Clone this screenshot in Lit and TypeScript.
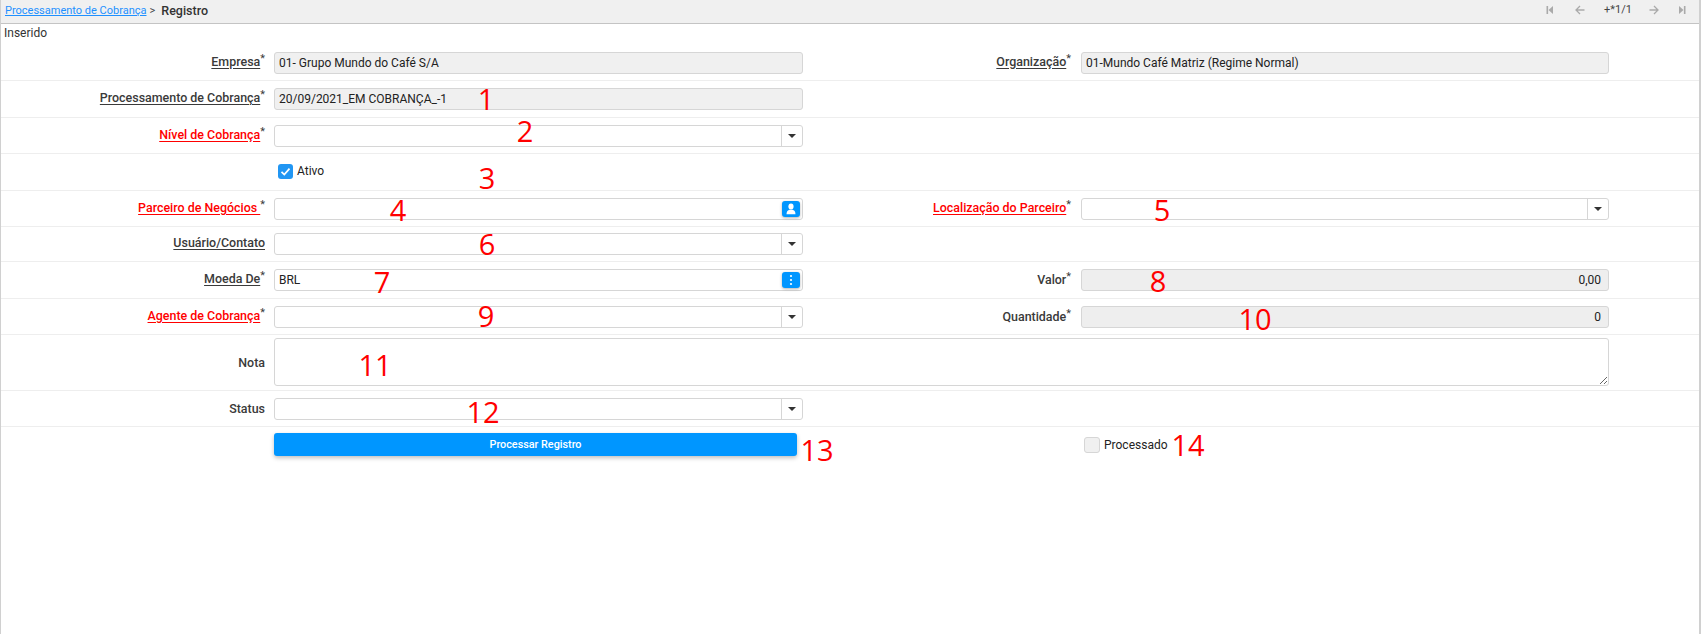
import { LitElement, html, css, nothing } from "lit";
import { customElement } from "lit/decorators.js";

type Kind = "ro" | "select" | "person" | "dots" | "roNum";
interface Field { label: string; kind: Kind; value?: string; req?: boolean; red?: boolean; plain?: boolean }
interface Row { h: number; a?: Field; b?: Field }

const rows: Row[] = [
  { h: 36, a: { label: "Empresa", kind: "ro", value: "01- Grupo Mundo do Café S/A", req: true }, b: { label: "Organização", kind: "ro", value: "01-Mundo Café Matriz (Regime Normal)", req: true } },
  { h: 37, a: { label: "Processamento de Cobrança", kind: "ro", value: "20/09/2021_EM COBRANÇA_-1", req: true } },
  { h: 36, a: { label: "Nível de Cobrança", kind: "select", req: true, red: true } },
];
const rows2: Row[] = [
  { h: 36, a: { label: "Parceiro de Negócios\u00a0", kind: "person", req: true, red: true }, b: { label: "Localização do Parceiro", kind: "select", req: true, red: true } },
  { h: 35, a: { label: "Usuário/Contato", kind: "select" } },
  { h: 37, a: { label: "Moeda De", kind: "dots", value: "BRL", req: true }, b: { label: "Valor", kind: "roNum", value: "0,00", req: true, plain: true } },
  { h: 36, a: { label: "Agente de Cobrança", kind: "select", req: true, red: true }, b: { label: "Quantidade", kind: "roNum", value: "0", req: true, plain: true } },
];
const notes: [string, number, number][] = [
  ["1", 486, 98], ["2", 525, 130], ["3", 487, 177], ["4", 398, 209], ["5", 1162, 209],
  ["6", 487, 243], ["7", 382, 281], ["8", 1158, 280], ["9", 486, 315], ["10", 1255, 318],
  ["11", 375, 364], ["12", 483, 411], ["13", 817, 449], ["14", 1188, 444],
];

@customElement("app-root")
export class AppRoot extends LitElement {
  static styles = css`
    :host { display: block; position: relative; width: 1701px; height: 634px; box-sizing: border-box; overflow: hidden; background: #fff;
      border-left: 1px solid #d0d0d0; border-right: 2px solid #d0d0d0; font: 12px Roboto, "Liberation Sans", Arial, sans-serif; color: #333; }
    .top { display: flex; align-items: center; box-sizing: border-box; background: #f0f0f0; border-bottom: 1px solid #c4c4c4; padding: 0 4px 3px 4px; height: 24px; }
    .crumb { color: #1e90ff; font-size: 11px; text-decoration: underline; }
    .arrow { margin: 0 6px 0 3px; color: #444; font-size: 11px; }
    .cur { font-weight: 500; color: #333; font-size: 12.5px; }
    .nav { margin-left: auto; display: flex; align-items: center; }
    .nav svg { display: block; }
    .nav .i1 { margin-right: 21px; }
    .nav .i2 { margin-right: 19px; }
    .count { font-size: 11px; color: #444; margin-right: 17px; margin-top: -2px; }
    .nav .i3 { margin-right: 19px; }
    .nav .i4 { margin-right: 9px; }
    .msg { height: 21px; box-sizing: border-box; padding: 2px 3px 0; font-size: 12px; line-height: 14px; color: #333; }
    .row { display: grid; box-sizing: border-box; grid-template-columns: 273px 529px 278px 528px; align-items: center; border-bottom: 1px solid #eeeeee; }
    .row.last { border-bottom: none; align-items: start; padding-top: 6px; }
    .lab { text-align: right; font-weight: 500; font-size: 12.45px; color: #3a3a3a; padding-right: 9px; margin-top: -3px; }
    .lab.r { padding-right: 10px; }
    .lab.plain { margin-top: -1px; }
    .lab u { text-underline-offset: 2px; }
    .lab.red u { color: #ff0000; }
    .lab sup { font-weight: normal; font-size: 11px; line-height: 0; vertical-align: 4px; }
    .f { display: flex; align-items: center; height: 22px; box-sizing: border-box; border: 1px solid #d6d6d6; border-radius: 3px; background: #fff; padding-left: 4px; font-size: 12px; color: #222; position: relative; }
    .f.ro { background: #f0f0f0; }
    .f.num { background: #eeeeee; justify-content: flex-end; padding-right: 7px; }
    .btnzone { margin-left: auto; width: 20px; align-self: stretch; border-left: 1px solid #d6d6d6; display: flex; align-items: center; justify-content: center; }
    .caret { width: 0; height: 0; border-left: 4px solid transparent; border-right: 4px solid transparent; border-top: 4px solid #333; }
    .ib { margin-left: auto; margin-right: 2px; width: 18px; height: 16px; border-radius: 3px; background: #0096ff; box-shadow: 0 1px 3px rgba(0,0,0,.3); display: flex; align-items: center; justify-content: center; }
    .check { display: flex; align-items: center; gap: 4px; font-size: 12px; color: #222; }
    .ck { width: 15px; height: 15px; box-sizing: border-box; border-radius: 3px; display: flex; align-items: center; justify-content: center; }
    .ck.on { background: #2196f3; margin-left: 4px; }
    .ck.off { width: 16px; height: 16px; background: #f0f0f0; border: 1px solid #d6d6d6; margin-left: 3px; }
    .ativo { grid-column: 2; margin-top: -2px; }
    .proc { grid-column: 4; margin-top: 4px; }
    textarea { display: block; grid-column: 2 / 5; width: 100%; height: 48px; box-sizing: border-box; border: 1px solid #d6d6d6; border-radius: 3px; background: #fff; margin: 3px 0 4px; padding: 0 4px; outline: none; }
    .go { grid-column: 2; width: 523px; height: 23px; border: none; border-radius: 3px; background: #0096ff; color: #fff; font: 500 10.8px Roboto, Arial, sans-serif; box-shadow: 0 2px 4px rgba(0,0,0,.25); padding: 0; }
    .n { position: absolute; color: #ff0000; font: 29px/1 "Open Sans", sans-serif; transform: translate(-50%, -50%); }
  `;

  private field(f: Field) {
    if (f.kind === "ro") return html`<div class="f ro">${f.value}</div>`;
    if (f.kind === "roNum") return html`<div class="f num">${f.value}</div>`;
    if (f.kind === "select") return html`<div class="f"><div class="btnzone"><div class="caret"></div></div></div>`;
    const icon = f.kind === "person"
      ? html`<svg width="12" height="12" viewBox="0 0 12 12" fill="#fff"><ellipse cx="6" cy="3.6" rx="2.6" ry="3"/><path d="M1.5 11.2c0-2.6 1.4-4.2 3-4.4h3c1.6.2 3 1.8 3 4.4z"/></svg>`
      : html`<svg width="4" height="12" viewBox="0 0 4 12" fill="#fff"><circle cx="2" cy="2" r="1.1"/><circle cx="2" cy="6" r="1.1"/><circle cx="2" cy="10" r="1.1"/></svg>`;
    return html`<div class="f">${f.value ?? nothing}<div class="ib">${icon}</div></div>`;
  }

  private label(f: Field | undefined, right: boolean) {
    if (!f) return html`<div></div>`;
    const cls = `lab ${right ? "r" : ""} ${f.red ? "red" : ""} ${f.plain ? "plain" : ""}`;
    const text = f.plain ? f.label : html`<u>${f.label}</u>`;
    return html`<div class=${cls}>${text}${f.req ? html`<sup>*</sup>` : nothing}</div>`;
  }

  private row(r: Row) {
    return html`<div class="row" style="height:${r.h}px">
      ${this.label(r.a, false)}${r.a ? this.field(r.a) : html`<div></div>`}
      ${r.b ? this.label(r.b, true) : nothing}${r.b ? this.field(r.b) : nothing}
    </div>`;
  }

  render() {
    return html`
      <div class="top">
        <span class="crumb">Processamento de Cobrança</span><span class="arrow">&gt;</span><span class="cur">Registro</span>
        <div class="nav">
          <svg class="i1" width="8" height="10" viewBox="0 0 8 10" fill="#aaa"><rect x="0.5" y="1" width="1.6" height="8"/><path d="M7 1v8L2.5 5z"/></svg>
          <svg class="i2" width="10" height="10" viewBox="0 0 10 10" fill="none" stroke="#aaa" stroke-width="1.3"><path d="M9.5 5H1M5 1L1 5l4 4"/></svg>
          <span class="count">+*1/1</span>
          <svg class="i3" width="10" height="10" viewBox="0 0 10 10" fill="none" stroke="#aaa" stroke-width="1.3"><path d="M.5 5H9M5 1l4 4-4 4"/></svg>
          <svg class="i4" width="8" height="10" viewBox="0 0 8 10" fill="#aaa"><rect x="5.9" y="1" width="1.6" height="8"/><path d="M1 1v8l4.5-4z"/></svg>
        </div>
      </div>
      <div class="msg">Inserido</div>
      ${rows.map((r) => this.row(r))}
      <div class="row" style="height:37px">
        <div class="check ativo">
          <div class="ck on"><svg width="11" height="11" viewBox="0 0 11 11" fill="none" stroke="#fff" stroke-width="1.7"><path d="M1.5 5.8l2.8 2.8 5.2-6"/></svg></div>
          <span>Ativo</span>
        </div>
      </div>
      ${rows2.map((r) => this.row(r))}
      <div class="row" style="height:56px">
        <div class="lab plain">Nota</div>
        <textarea aria-label="Nota"></textarea>
      </div>
      <div class="row" style="height:36px">
        <div class="lab plain">Status</div>
        <div class="f"><div class="btnzone"><div class="caret"></div></div></div>
      </div>
      <div class="row last">
        <button class="go">Processar Registro</button>
        <div class="check proc"><div class="ck off"></div><span>Processado</span></div>
      </div>
      ${notes.map(([t, x, y]) => html`<div class="n" style="left:${x - 1}px;top:${y}px">${t}</div>`)}
    `;
  }
}
